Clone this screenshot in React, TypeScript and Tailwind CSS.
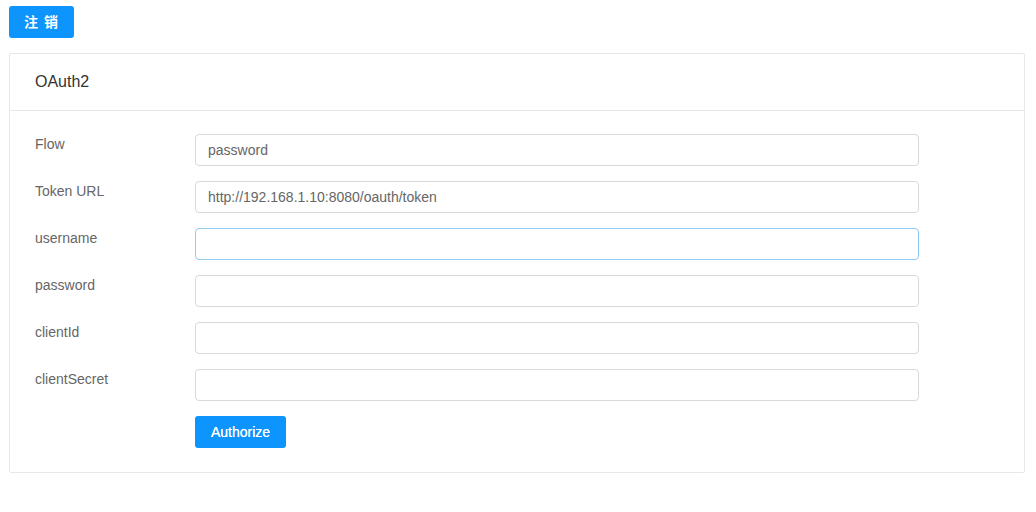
import { useState } from "react"

const FIELDS = [
  { label: "Flow", value: "password" },
  { label: "Token URL", value: "http://192.168.1.10:8080/oauth/token" },
  { label: "username", value: "", focused: true },
  { label: "password", value: "" },
  { label: "clientId", value: "" },
  { label: "clientSecret", value: "" },
] as const

export default function App() {
  const [values, setValues] = useState<string[]>(FIELDS.map((f) => f.value))

  return (
    <div className="min-h-screen bg-white px-[9px] pt-[6px] font-['Liberation_Sans','Noto_Sans_CJK_SC',sans-serif]">
      <button className="h-8 w-[65px] rounded-[3px] bg-[#0e95fd] text-[14px] font-bold tracking-[1px] text-white">
        注 销
      </button>

      <div className="mt-[15px] w-[1016px] rounded-[2px] border border-[#e8e8e8]">
        {/* Header */}
        <div className="flex h-[57px] items-center border-b border-[#e8e8e8] px-[25px] text-[16px] text-[#333]">
          OAuth2
        </div>

        {/* Form */}
        <div className="flex flex-col gap-[15px] px-[25px] pt-[23px] pb-[24px]">
          {FIELDS.map((field, i) => (
            <div key={field.label} className="flex">
              <label className="w-[160px] shrink-0 text-[14px] leading-[20px] text-[#666]">
                {field.label}
              </label>
              <input
                value={values[i]}
                onChange={(e) => {
                  const next = [...values]
                  next[i] = e.target.value
                  setValues(next)
                }}
                className={[
                  "h-8 w-[724px] rounded-[4px] border bg-white px-3 text-[14px] text-[#666] outline-none",
                  "focused" in field ? "border-[#8fcaf2]" : "border-[#d9d9d9]",
                ].join(" ")}
              />
            </div>
          ))}
          <div className="flex">
            <div className="w-[160px] shrink-0" />
            <button className="h-8 w-[91px] rounded-[3px] bg-[#0e95fd] text-[14px] text-white [text-shadow:0_0_0.4px_#fff]">
              Authorize
            </button>
          </div>
        </div>
      </div>
    </div>
  )
}
